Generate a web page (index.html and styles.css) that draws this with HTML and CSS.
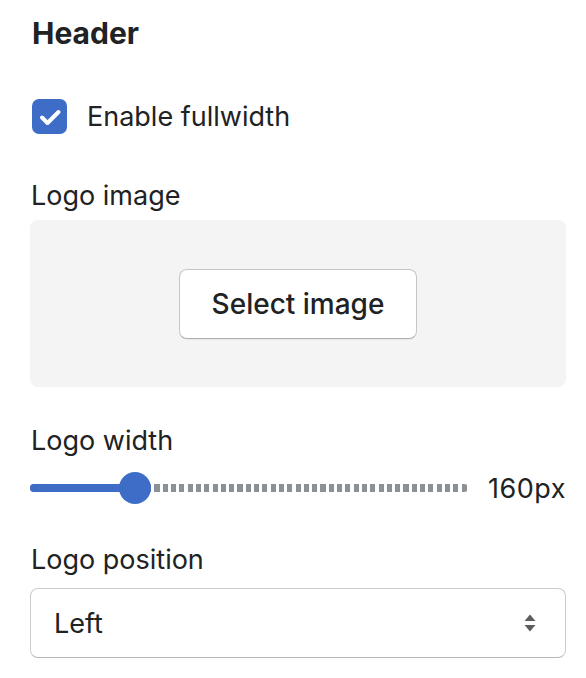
FILE: index.html
```html
<!DOCTYPE html>
<html>
<head>
    <link rel="stylesheet" href="styles.css">
    <title>Header settings</title>
</head>
<body>
    <div class="panel">
        <h2 class="title">Header</h2>

        <label class="check-row">
            <span class="checkbox">
                <svg width="35" height="35" viewBox="0 0 35 35"><path d="M10 18.5l5.5 5.5 11-11" fill="none" stroke="#fff" stroke-width="4" stroke-linecap="round" stroke-linejoin="round"/></svg>
            </span>
            <span class="check-label">Enable fullwidth</span>
        </label>

        <div class="field">
            <div class="label">Logo image</div>
            <div class="image-box">
                <button class="btn" type="button">Select image</button>
            </div>
        </div>

        <div class="field field-width">
            <div class="label">Logo width</div>
            <div class="range-row">
                <div class="range">
                    <div class="range-rest"></div>
                    <div class="range-fill" style="width: 105px"></div>
                    <div class="range-thumb" style="left: 105px"></div>
                </div>
                <span class="range-value">160px</span>
            </div>
        </div>

        <div class="field field-position">
            <div class="label">Logo position</div>
            <div class="select">
                <span>Left</span>
                <svg class="select-arrows" width="14" height="24" viewBox="0 0 14 24"><path d="M7 3.5l5.5 6.5H1.5z M7 20.5l5.5-6.5H1.5z" fill="#5c5f62"/></svg>
            </div>
        </div>
    </div>
</body>
</html>
```

FILE: styles.css
```css
body {
    margin: 0;
    font-family: Inter, "Noto Sans", sans-serif;
    color: #202223;
    background: #fff;
}

.panel {
    width: 536px;
    padding: 13px 0 0 30px;
}

.title {
    margin: 0;
    font-size: 30px;
    line-height: 40px;
    font-weight: 650;
    padding-left: 2px;
}

.check-row {
    display: flex;
    align-items: center;
    gap: 20px;
    height: 36px;
    margin-top: 45px;
    padding-left: 2px;
    font-size: 27px;
}

.checkbox {
    width: 35px;
    height: 35px;
    border-radius: 7px;
    background: #3e6dc8;
    display: flex;
}

.field {
    margin-top: 44px;
}

.label {
    font-size: 27px;
    line-height: 36px;
    padding-left: 1px;
}

.image-box {
    margin-top: 6px;
    height: 167px;
    background: #f4f4f4;
    border-radius: 8px;
    display: flex;
    align-items: center;
    justify-content: center;
}

.btn {
    width: 238px;
    height: 70px;
    background: #fff;
    border: 1px solid #c4c7ca;
    border-bottom-color: #aeb2b6;
    border-radius: 8px;
    box-shadow: 0 1px 0 rgba(0, 0, 0, 0.05);
    font-family: inherit;
    font-size: 28px;
    font-weight: 500;
    color: #202223;
    margin-top: 1px;
}

.field-width {
    margin-top: 36px;
}

.range-row {
    display: flex;
    align-items: center;
    gap: 18px;
    height: 36px;
    margin-top: 11px;
}

.range {
    position: relative;
    flex: 1;
    height: 8px;
}

.range-rest {
    height: 8px;
    border-radius: 4px;
    background: repeating-linear-gradient(90deg, #8c9196 0 5px, transparent 5px 8.3px);
}

.range-fill {
    position: absolute;
    left: 0;
    top: 0;
    height: 8px;
    border-radius: 4px;
    background: #3e6dc8;
}

.range-thumb {
    position: absolute;
    top: -12px;
    width: 32px;
    height: 32px;
    margin-left: -16px;
    border-radius: 50%;
    background: #3e6dc8;
}

.range-value {
    width: 80px;
    font-size: 27px;
    letter-spacing: 0.5px;
    text-align: right;
}

.field-position {
    margin-top: 36px;
}

.select {
    margin-top: 10px;
    height: 68px;
    border: 1px solid #c9cccf;
    border-bottom-color: #b5b9bd;
    border-radius: 8px;
    display: flex;
    align-items: center;
    justify-content: space-between;
    padding: 0 28px 0 23px;
    font-size: 27px;
}
```
